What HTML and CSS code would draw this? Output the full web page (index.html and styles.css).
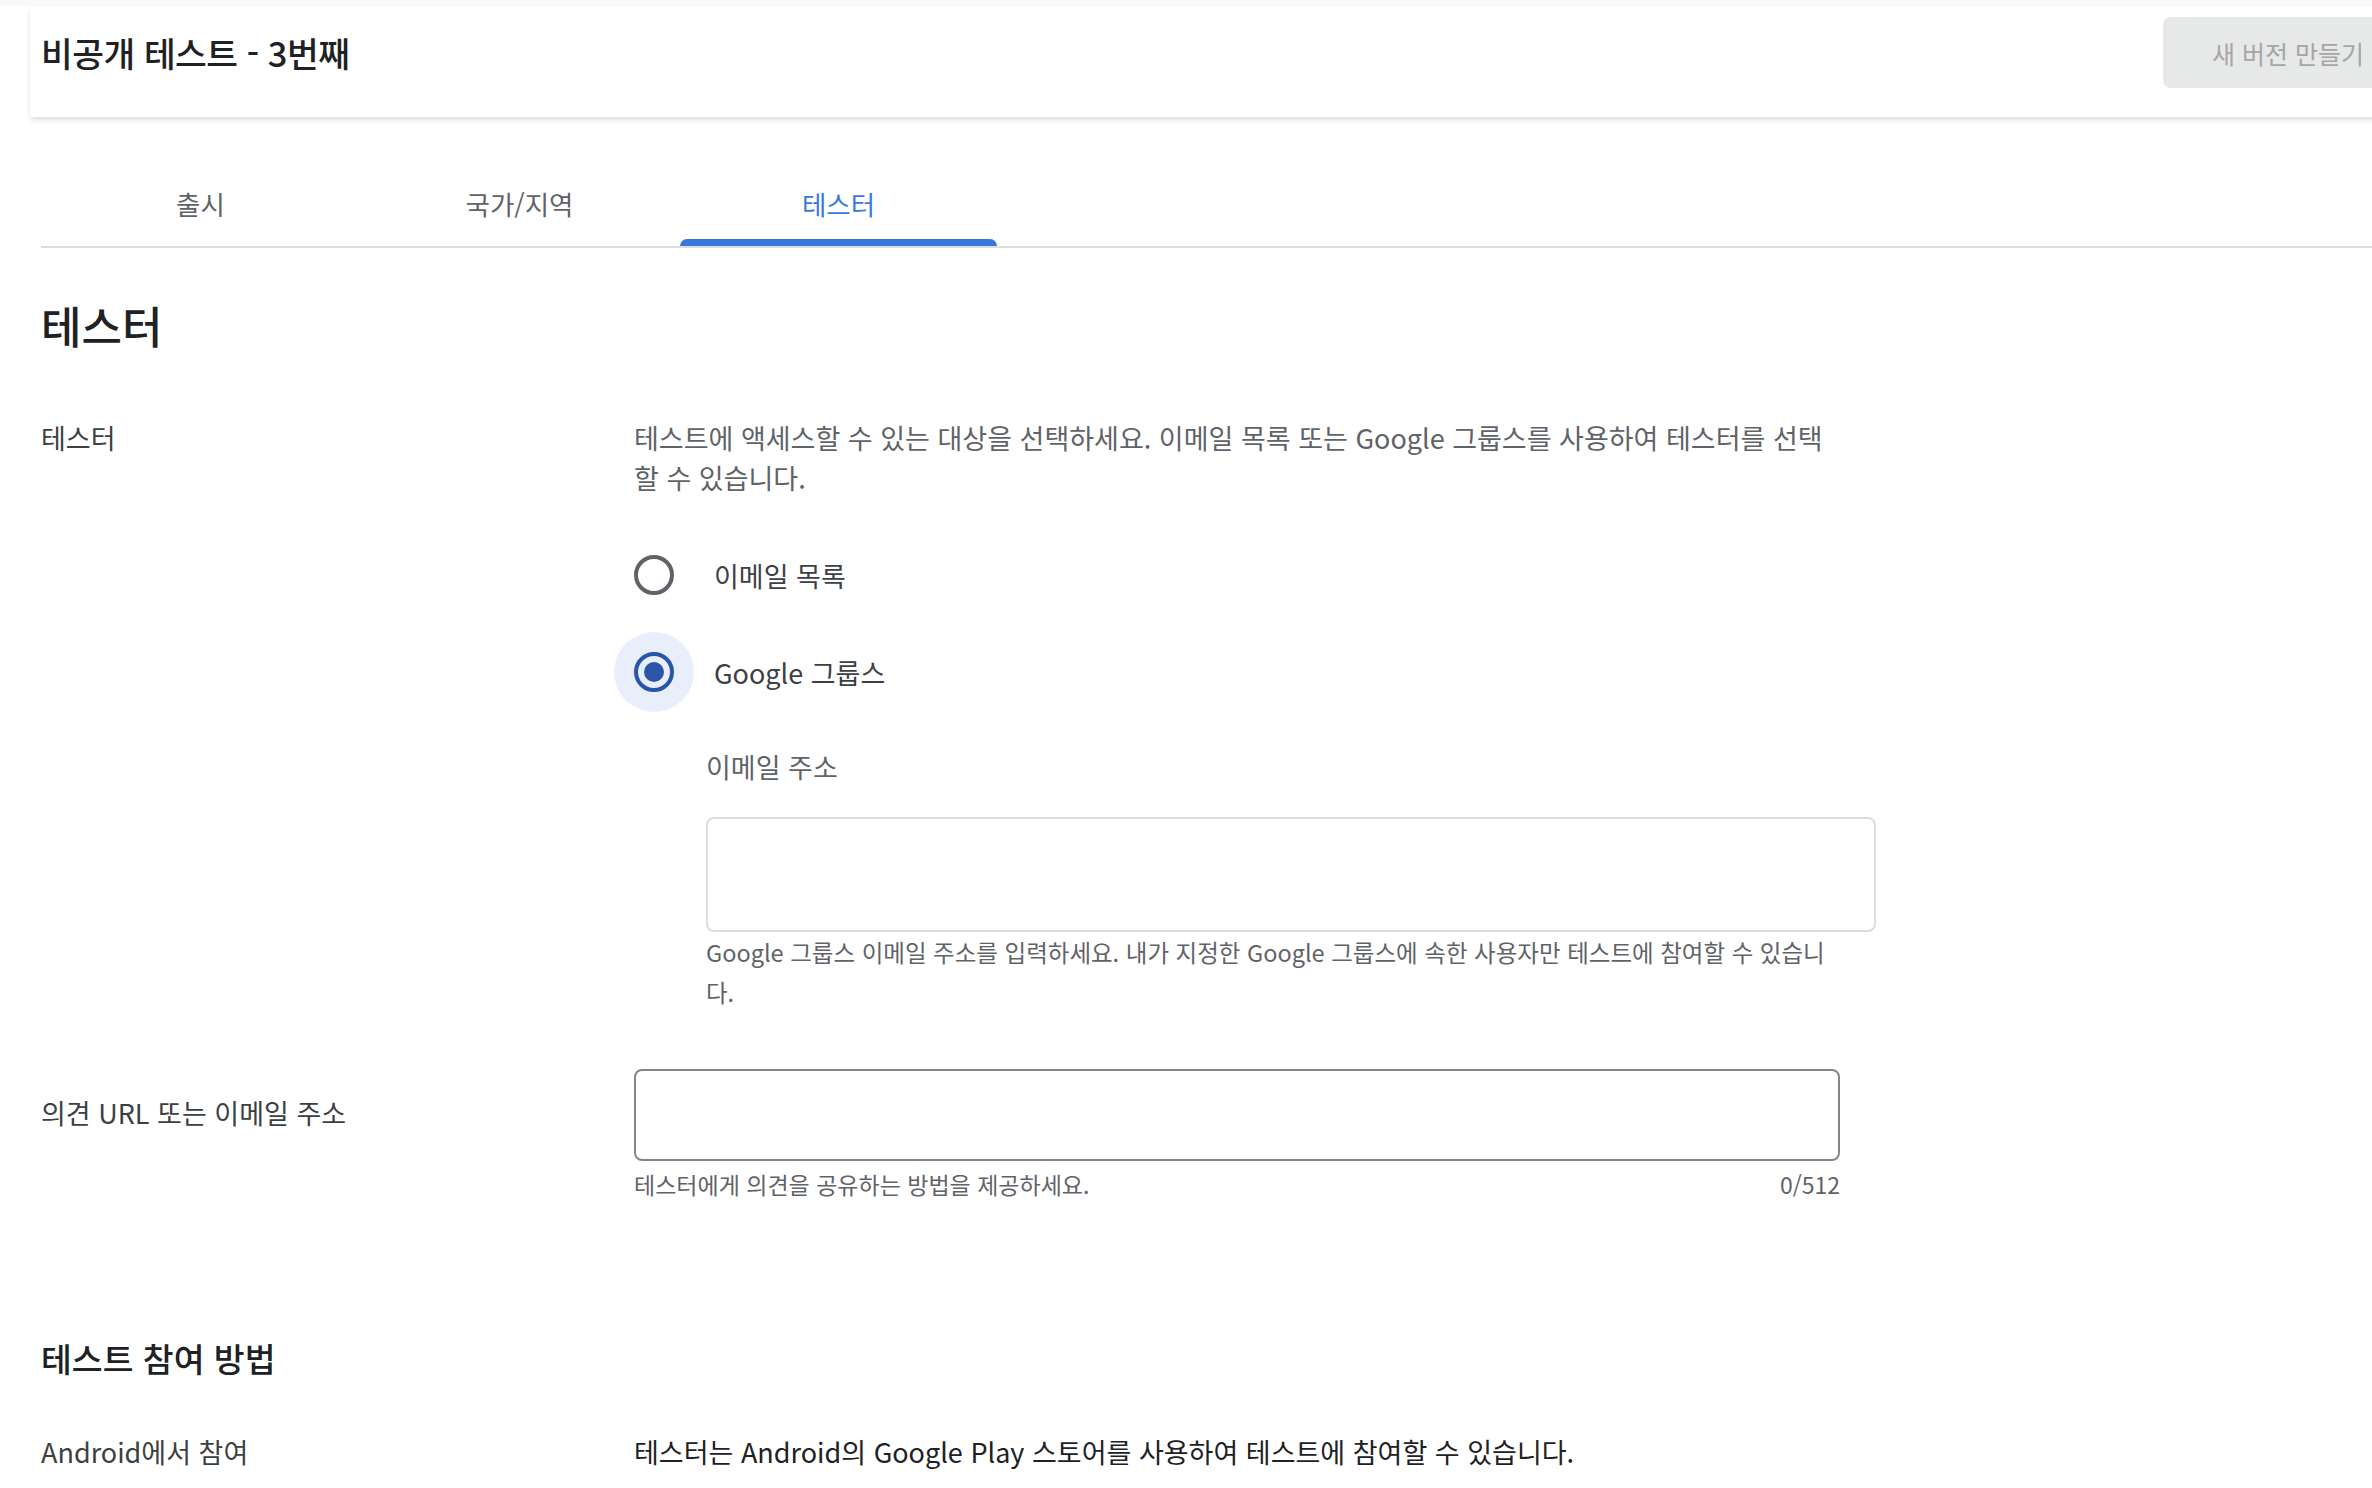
FILE: index.html
```html
<!DOCTYPE html>
<html lang="ko">
<head>
  <meta charset="UTF-8">
  <meta name="viewport" content="width=device-width, initial-scale=1.0">
  <title>비공개 테스트 - 3번째</title>
  <link rel="stylesheet" href="styles.css">
</head>
<body>
  <div class="topbar"></div>
  <header class="page-header">
    <h1 class="page-title">비공개 테스트 - 3번째</h1>
    <button class="btn-new" disabled>새 버전 만들기</button>
  </header>

  <main class="content">
    <nav class="tabs">
      <a class="tab">출시</a>
      <a class="tab">국가/지역</a>
      <a class="tab active">테스터</a>
    </nav>

    <h2 class="section-title">테스터</h2>

    <div class="row">
      <div class="row-label">테스터</div>
      <div class="row-body">
        <p class="desc">테스트에 액세스할 수 있는 대상을 선택하세요. 이메일 목록 또는 Google 그룹스를 사용하여 테스터를 선택할 수 있습니다.</p>

        <div class="radio-list">
          <label class="radio-option">
            <span class="radio-hit"><span class="radio-circle"></span></span>
            <span class="radio-text">이메일 목록</span>
          </label>
          <label class="radio-option checked">
            <span class="radio-hit"><span class="radio-circle"></span></span>
            <span class="radio-text">Google 그룹스</span>
          </label>
        </div>

        <div class="group-email">
          <div class="field-label">이메일 주소</div>
          <input class="input-box" type="text">
          <div class="hint">Google 그룹스 이메일 주소를 입력하세요. 내가 지정한 Google 그룹스에 속한 사용자만 테스트에 참여할 수 있습니다.</div>
        </div>
      </div>
    </div>

    <div class="row row-feedback">
      <div class="row-label mid">의견 URL 또는 이메일 주소</div>
      <div class="row-body">
        <input class="input-box outlined" type="text">
        <div class="hint-row">
          <span>테스터에게 의견을 공유하는 방법을 제공하세요.</span>
          <span>0/512</span>
        </div>
      </div>
    </div>

    <h3 class="sub-title">테스트 참여 방법</h3>

    <div class="row row-join">
      <div class="row-label">Android에서 참여</div>
      <div class="row-body value">테스터는 Android의 Google Play 스토어를 사용하여 테스트에 참여할 수 있습니다.</div>
    </div>
  </main>
</body>
</html>
```

FILE: styles.css
```css
body {
  margin: 0;
  font-family: "Noto Sans CJK KR", "Noto Sans", sans-serif;
  color: #202124;
  background-color: #fff;
  overflow-x: hidden;
}
.topbar {
  height: 6px;
  background-color: #f7f9fc;
}
.page-header {
  box-sizing: border-box;
  width: calc(100% + 51px);
  height: 111px;
  margin-left: 30px;
  padding: 11px 30px 0 11px;
  display: flex;
  align-items: flex-start;
  background-color: #fff;
  box-shadow: 0 3px 5px -1px rgba(60, 64, 67, 0.22);
}
.page-title {
  margin: 0;
  height: 71px;
  line-height: 71px;
  font-size: 34.5px;
  font-weight: 500;
  letter-spacing: -0.5px;
}
.btn-new {
  margin-left: auto;
  box-sizing: border-box;
  width: 260px;
  height: 71px;
  padding: 0 0 0 49px;
  border: none;
  border-radius: 8px;
  background-color: #e7e8e8;
  color: #a6a6a6;
  text-align: left;
  white-space: nowrap;
  font-family: inherit;
  font-size: 25px;
}
.content {
  padding-left: 41px;
}
.tabs {
  display: flex;
  margin-top: 70px;
  border-bottom: 2px solid #dadce0;
}
.tab {
  position: relative;
  width: 319px;
  padding-bottom: 25px;
  text-align: center;
  font-size: 26.5px;
  line-height: 34px;
  color: #5f6368;
  cursor: pointer;
}
.tab.active {
  color: #3878de;
}
.tab.active::after {
  content: "";
  position: absolute;
  left: 1px;
  right: 1px;
  bottom: 0;
  height: 7px;
  border-radius: 7px 7px 0 0;
  background-color: #3878de;
}
.section-title {
  margin: 52px 0 0;
  font-size: 44px;
  line-height: 50px;
  font-weight: 500;
}
.row {
  display: grid;
  grid-template-columns: 593px 1fr;
  margin-top: 68px;
}
.row-label {
  font-size: 27px;
  line-height: 40px;
  color: #3c4043;
}
.row-label.mid {
  padding-top: 24px;
}
.desc {
  margin: 0;
  max-width: 1196px;
  font-size: 27px;
  line-height: 40px;
  color: #5f6368;
}
.radio-list {
  display: flex;
  flex-direction: column;
  gap: 17px;
  margin: 37px 0 0 -20px;
}
.radio-option {
  display: flex;
  align-items: center;
  gap: 20px;
  height: 80px;
  font-size: 27px;
  color: #3c4043;
  cursor: pointer;
}
.radio-hit {
  width: 80px;
  height: 80px;
  border-radius: 50%;
  display: flex;
  align-items: center;
  justify-content: center;
}
.radio-circle {
  position: relative;
  box-sizing: border-box;
  width: 40px;
  height: 40px;
  border: 4px solid #5f6368;
  border-radius: 50%;
}
.checked .radio-hit {
  background-color: #e8effb;
}
.checked .radio-circle {
  border-color: #2a56a8;
}
.checked .radio-circle::after {
  content: "";
  position: absolute;
  inset: 6px;
  border-radius: 50%;
  background-color: #2a56a8;
}
.group-email {
  margin-left: 72px;
}
.field-label {
  margin-top: 35px;
  font-size: 27px;
  line-height: 40px;
  color: #5f6368;
}
.input-box {
  display: block;
  box-sizing: border-box;
  width: 1170px;
  height: 115px;
  margin: 30px 0 0;
  padding: 0 24px;
  border: 2px solid #dadce0;
  border-radius: 8px;
  font-family: inherit;
  font-size: 27px;
  outline: none;
}
.hint {
  max-width: 1120px;
  font-size: 23.5px;
  line-height: 40px;
  color: #5f6368;
}
.row-feedback {
  margin-top: 57px;
}
.input-box.outlined {
  width: 1206px;
  height: 92px;
  margin-top: 0;
  border-color: #80868b;
}
.hint-row {
  display: flex;
  justify-content: space-between;
  width: 1206px;
  margin-top: 8px;
  font-size: 23px;
  line-height: 30px;
  color: #5f6368;
}
.sub-title {
  margin: 137px 0 0;
  font-size: 33.5px;
  line-height: 44px;
  font-weight: 500;
}
.row-join {
  margin-top: 52px;
}
.value {
  font-size: 27px;
  line-height: 40px;
  color: #202124;
}
```
